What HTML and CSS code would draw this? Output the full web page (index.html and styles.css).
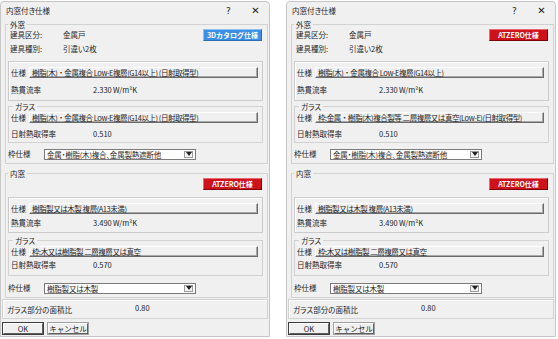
FILE: index.html
```html
<!DOCTYPE html>
<html lang="ja">
<head>
    <meta charset="UTF-8">
    <meta name="viewport" content="width=device-width, initial-scale=1.0">
    <title>内窓付き仕様</title>
    <link rel="stylesheet" href="styles.css">
</head>
<body>
<div class="screen">

  <!-- left: 3D catalogue spec -->
  <div class="dialog">
    <div class="titlebar">
      <span class="title">内窓付き仕様</span>
      <span class="help">?</span>
      <span class="close">✕</span>
    </div>
    <div class="dialog-body">
      <fieldset class="group">
        <legend>外窓</legend>
        <div class="head-row">
          <div class="info">
            <div class="info-row"><span class="info-label">建具区分:</span><span>金属戸</span></div>
            <div class="info-row"><span class="info-label">建具種別:</span><span>引違い2枚</span></div>
          </div>
          <button class="tag tag-blue">3Dカタログ仕様</button>
        </div>
        <div class="panel">
          <div class="spec-row"><span class="spec-label">仕様</span><button class="spec-btn">樹脂(木)・金属複合 Low-E複層(G14以上) (日射取得型)</button></div>
          <div class="value-row"><span class="value-label">熱貫流率</span><span class="value">2.330</span><span>W/m²K</span></div>
        </div>
        <fieldset class="group glass">
          <legend>ガラス</legend>
          <div class="spec-row"><span class="spec-label">仕様</span><button class="spec-btn">樹脂(木)・金属複合 Low-E複層(G14以上) (日射取得型)</button></div>
          <div class="value-row"><span class="value-label">日射熱取得率</span><span class="value">0.510</span></div>
        </fieldset>
        <div class="frame-row">
          <span class="frame-label">枠仕様</span>
          <div class="select"><span class="select-text">金属・樹脂(木)複合、金属製熱遮断他</span><span class="select-arrow"><svg width="6" height="4" viewBox="0 0 6 4"><path d="M0 0h6L3 4z" fill="#222"/></svg></span></div>
        </div>
      </fieldset>

      <fieldset class="group inner">
        <legend>内窓</legend>
        <div class="tag-row"><button class="tag tag-red">ATZERO仕様</button></div>
        <div class="panel">
          <div class="spec-row"><span class="spec-label">仕様</span><button class="spec-btn">樹脂製又は木製 複層(A13未満)</button></div>
          <div class="value-row"><span class="value-label">熱貫流率</span><span class="value">3.490</span><span>W/m²K</span></div>
        </div>
        <fieldset class="group glass">
          <legend>ガラス</legend>
          <div class="spec-row"><span class="spec-label">仕様</span><button class="spec-btn">枠:木又は樹脂製 二層複層又は真空</button></div>
          <div class="value-row"><span class="value-label">日射熱取得率</span><span class="value">0.570</span></div>
        </fieldset>
        <div class="frame-row">
          <span class="frame-label">枠仕様</span>
          <div class="select"><span class="select-text">樹脂製又は木製</span><span class="select-arrow"><svg width="6" height="4" viewBox="0 0 6 4"><path d="M0 0h6L3 4z" fill="#222"/></svg></span></div>
        </div>
      </fieldset>

      <div class="area-box">
        <span class="area-label">ガラス部分の面積比</span>
        <span class="area-value">0.80</span>
      </div>
      <div class="actions">
        <button class="btn btn-default">OK</button>
        <button class="btn">キャンセル</button>
      </div>
    </div>
  </div>

  <!-- right: ATZERO spec -->
  <div class="dialog">
    <div class="titlebar">
      <span class="title">内窓付き仕様</span>
      <span class="help">?</span>
      <span class="close">✕</span>
    </div>
    <div class="dialog-body">
      <fieldset class="group">
        <legend>外窓</legend>
        <div class="head-row">
          <div class="info">
            <div class="info-row"><span class="info-label">建具区分:</span><span>金属戸</span></div>
            <div class="info-row"><span class="info-label">建具種別:</span><span>引違い2枚</span></div>
          </div>
          <button class="tag tag-red">ATZERO仕様</button>
        </div>
        <div class="panel">
          <div class="spec-row"><span class="spec-label">仕様</span><button class="spec-btn">樹脂(木)・金属複合 Low-E複層(G14以上)</button></div>
          <div class="value-row"><span class="value-label">熱貫流率</span><span class="value">2.330</span><span>W/m²K</span></div>
        </div>
        <fieldset class="group glass">
          <legend>ガラス</legend>
          <div class="spec-row"><span class="spec-label">仕様</span><button class="spec-btn">枠:金属・樹脂(木)複合製等 二層複層又は真空(Low-E)(日射取得型)</button></div>
          <div class="value-row"><span class="value-label">日射熱取得率</span><span class="value">0.510</span></div>
        </fieldset>
        <div class="frame-row">
          <span class="frame-label">枠仕様</span>
          <div class="select"><span class="select-text">金属・樹脂(木)複合、金属製熱遮断他</span><span class="select-arrow"><svg width="6" height="4" viewBox="0 0 6 4"><path d="M0 0h6L3 4z" fill="#222"/></svg></span></div>
        </div>
      </fieldset>

      <fieldset class="group inner">
        <legend>内窓</legend>
        <div class="tag-row"><button class="tag tag-red">ATZERO仕様</button></div>
        <div class="panel">
          <div class="spec-row"><span class="spec-label">仕様</span><button class="spec-btn">樹脂製又は木製 複層(A13未満)</button></div>
          <div class="value-row"><span class="value-label">熱貫流率</span><span class="value">3.490</span><span>W/m²K</span></div>
        </div>
        <fieldset class="group glass">
          <legend>ガラス</legend>
          <div class="spec-row"><span class="spec-label">仕様</span><button class="spec-btn">枠:木又は樹脂製 二層複層又は真空</button></div>
          <div class="value-row"><span class="value-label">日射熱取得率</span><span class="value">0.570</span></div>
        </fieldset>
        <div class="frame-row">
          <span class="frame-label">枠仕様</span>
          <div class="select"><span class="select-text">樹脂製又は木製</span><span class="select-arrow"><svg width="6" height="4" viewBox="0 0 6 4"><path d="M0 0h6L3 4z" fill="#222"/></svg></span></div>
        </div>
      </fieldset>

      <div class="area-box">
        <span class="area-label">ガラス部分の面積比</span>
        <span class="area-value">0.80</span>
      </div>
      <div class="actions">
        <button class="btn btn-default">OK</button>
        <button class="btn">キャンセル</button>
      </div>
    </div>
  </div>

</div>
</body>
</html>
```

FILE: styles.css
```css
* {
  box-sizing: border-box;
}

body {
  margin: 0;
  background-color: #fff;
  font-family: "Noto Sans CJK JP", "Noto Sans", sans-serif;
  font-size: 7.5px;
  line-height: 12px;
  font-feature-settings: "palt";
  color: #1e1e1e;
}

button {
  font-family: inherit;
  font-size: inherit;
  color: inherit;
  margin: 0;
  cursor: default;
}

.screen {
  display: flex;
  gap: 16px;
  padding-top: 1px;
}

.dialog {
  width: 270px;
  height: 336px;
  background-color: #f0f0f0;
  border: 1px solid #c6c6c6;
  border-radius: 4px 4px 0 0;
  display: flex;
  flex-direction: column;
  overflow: hidden;
}

.titlebar {
  flex-shrink: 0;
  height: 18px;
  display: flex;
  align-items: center;
  padding-left: 5px;
}

.title {
  flex: 1;
}

.help,
.close {
  width: 27px;
  text-align: center;
  font-family: "DejaVu Sans", sans-serif;
}

.help {
  font-size: 9px;
}

.close {
  font-size: 10px;
}

.dialog-body {
  padding: 0 1px 0 4px;
}

/* group boxes */
.group {
  margin: 0;
  min-width: 0;
  border: 1px solid #d2d2d2;
  padding: 0 4px 3px 2px;
}

.group legend {
  padding: 0 2px;
  line-height: 9px;
}

.group.glass {
  margin-top: 1px;
  padding: 0 4px 2px 2px;
}

.group.glass legend {
  margin-left: 2px;
}

.group.inner {
  margin-top: 5px;
}

.head-row {
  display: flex;
  justify-content: space-between;
  align-items: flex-start;
}

.info {
  padding-left: 2px;
}

.info-row {
  display: flex;
  height: 12px;
}

.info-row + .info-row {
  margin-top: 2px;
}

.info-label {
  width: 53px;
}

.tag-row {
  display: flex;
  justify-content: flex-end;
}

.tag {
  width: 59px;
  height: 12px;
  margin-right: 1px;
  padding: 0;
  font-size: 7px;
  font-weight: bold;
  line-height: 10px;
  color: #fff;
  border: 1px solid;
}

.tag-blue {
  background-color: #3a8fe4;
  border-color: #8fc0f2 #2a6cb8 #2a6cb8 #8fc0f2;
}

.tag-red {
  background-color: #cf111b;
  border-color: #e86a70 #7c0006 #7c0006 #e86a70;
}

/* sunken panel with spec + value */
.panel {
  margin-top: 6px;
  border: 1px solid #cbcbcb;
  box-shadow: inset 1px 1px 0 #fff;
  padding: 5px 4px 4px 2px;
}

.spec-row {
  display: flex;
  align-items: center;
  height: 11px;
  line-height: 11px;
}

.spec-label {
  width: 18px;
  flex-shrink: 0;
}

.spec-btn {
  flex: 1;
  min-width: 0;
  height: 11px;
  padding: 0 2px;
  text-align: left;
  line-height: 9px;
  letter-spacing: -0.45px;
  white-space: nowrap;
  overflow: hidden;
  background-color: #f0f0f0;
  border: 1px solid;
  border-color: #fff #6a6a6a #6a6a6a #fff;
  box-shadow: inset -1px -1px 0 #a9a9a9;
}

.value-row {
  display: flex;
  margin-top: 6px;
}

.value-label {
  width: 82px;
}

.value {
  width: 20px;
}

.glass .spec-row {
  margin-top: 1px;
}

.glass .value-row {
  margin-top: 5px;
}

/* inner window block is a bit tighter */
.inner .panel {
  margin-top: 7px;
  padding-bottom: 3px;
}

.inner .panel .value-row {
  margin-top: 3px;
}

.inner .glass {
  margin-top: 3px;
  padding-bottom: 4px;
}

.inner .glass .value-row {
  margin-top: 2px;
}

.inner .frame-row {
  margin-top: 6px;
}

/* frame select */
.frame-row {
  display: flex;
  align-items: center;
  margin-top: 5px;
}

.frame-label {
  width: 36px;
}

.select {
  width: 152px;
  height: 11px;
  background-color: #fff;
  border: 1px solid #7a7a7a;
  display: flex;
  align-items: center;
  padding-left: 2px;
  line-height: 9px;
}

.select-text {
  flex: 1;
  white-space: nowrap;
  overflow: hidden;
  letter-spacing: -0.2px;
}

.select-arrow {
  width: 9px;
  height: 7px;
  margin-right: 2px;
  border: 1px solid #9a9a9a;
  background-color: #f4f4f4;
  display: flex;
  align-items: center;
  justify-content: center;
}

.select-arrow svg {
  display: block;
}

/* bottom */
.area-box {
  margin: 1px 0 0 -3px;
  height: 20px;
  border: 1px solid #d2d2d2;
  box-shadow: inset 1px 1px 0 #fff;
  display: flex;
  align-items: center;
  padding-left: 4px;
}

.area-label {
  width: 128px;
  margin-top: 2px;
}

.area-value {
  margin-top: -2px;
}

.actions {
  display: flex;
  gap: 5px;
  margin: 4px 0 0 -2px;
}

.btn {
  width: 40px;
  height: 11px;
  padding: 0;
  line-height: 9px;
  background-color: #f0f0f0;
  border: 1px solid;
  border-color: #fff #5f5f5f #5f5f5f #fff;
  box-shadow: 0 0 0 1px #a0a0a0;
}

.btn-default {
  box-shadow: 0 0 0 1px #3c3c3c;
}
```
